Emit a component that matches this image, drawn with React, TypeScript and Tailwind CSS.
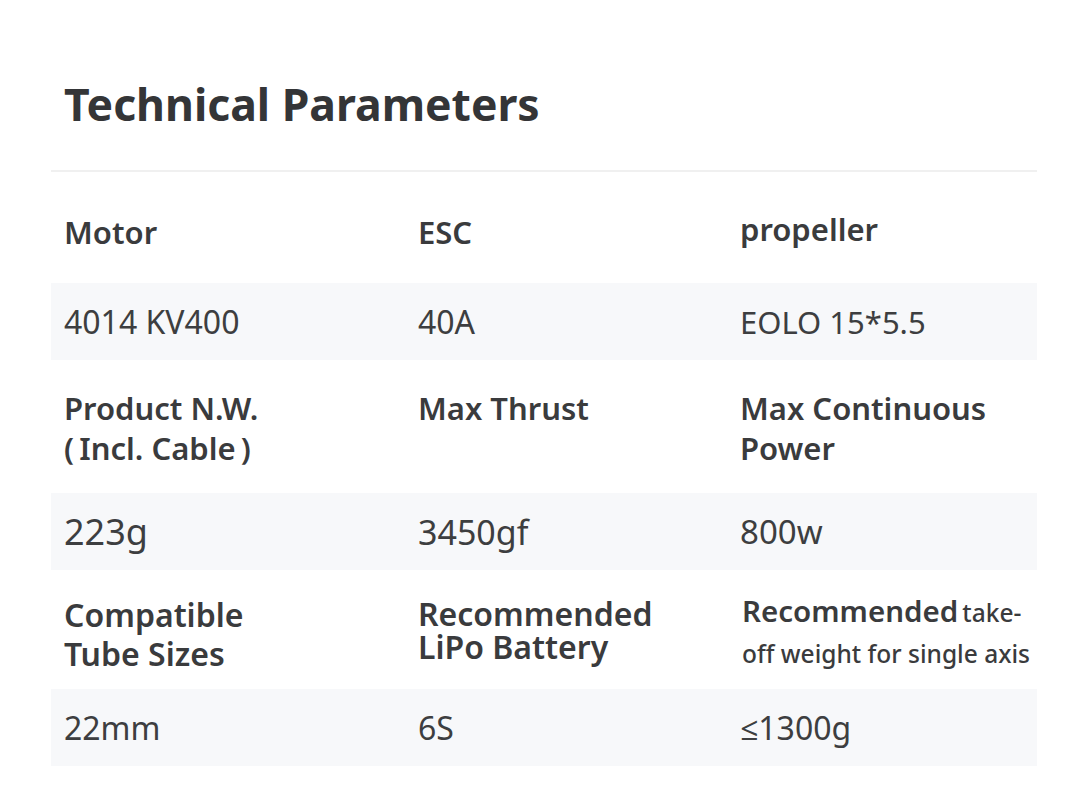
const rows = [
  {
    head: [["Motor"], ["ESC"], ["propeller"]],
    vals: ["4014 KV400", "40A", "EOLO 15*5.5"],
  },
  {
    head: [["Product N.W.", "(\u2009Incl. Cable\u2009)"], ["Max Thrust"], ["Max Continuous", "Power"]],
    vals: ["223g", "3450gf", "800w"],
  },
  {
    vals: ["22mm", "6S", "≤1300g"],
  },
];

function HeadRow({ cells, top }: { cells: string[][]; top: string }) {
  return (
    <div className={`grid grid-cols-[354px_322px_1fr] ${top}`}>
      {cells.map((lines, i) => (
        <div
          key={i}
          className={`pl-[13px] text-[31px] font-semibold leading-[40px] text-[#3a3b3d] ${
            lines[0] === "propeller" ? "-mt-[3px]" : ""
          }`}
        >
          {lines.map((l) => (
            <div key={l}>{l}</div>
          ))}
        </div>
      ))}
    </div>
  );
}

function ValRow({ vals, sizes }: { vals: string[]; sizes: string[] }) {
  return (
    <div className="grid h-[77px] grid-cols-[354px_322px_1fr] items-center bg-[#f7f8fa]">
      {vals.map((v, i) => (
        <div key={v} className={`pl-[13px] leading-[40px] text-[#3d3e40] ${sizes[i]}`}>
          {v}
        </div>
      ))}
    </div>
  );
}

export default function App() {
  return (
    <div
      className="min-h-[811px] w-[1088px] bg-white px-[51px] pt-[74px]"
      style={{ fontFamily: '"Noto Sans", "Open Sans", sans-serif' }}
    >
      <h1 className="pl-[13px] text-[44.5px] font-bold leading-[60px] text-[#343537]">
        Technical Parameters
      </h1>
      <div className="mt-[36px] h-[2px] bg-[#f0f0f0]" />

      <HeadRow cells={rows[0].head!} top="h-[111px] pt-[40px]" />
      <ValRow vals={rows[0].vals} sizes={["text-[32px]", "text-[32px]", "text-[31px]"]} />

      <HeadRow cells={rows[1].head!} top="h-[133px] pt-[28px]" />
      <ValRow vals={rows[1].vals} sizes={["text-[36px]", "text-[34px]", "text-[33px]"]} />

      <div className="grid h-[119px] grid-cols-[354px_322px_1fr] text-[#3a3b3d]">
        <div className="pl-[13px] pt-[25px] text-[32px] font-semibold leading-[39px]">
          <div>Compatible</div>
          <div>Tube Sizes</div>
        </div>
        <div className="pl-[13px] pt-[27px] text-[32px] font-semibold leading-[33px]">
          <div>Recommended</div>
          <div>LiPo Battery</div>
        </div>
        <div className="pl-[15px] pt-[22px] font-semibold leading-[37px]">
          <div className="whitespace-nowrap">
            <span className="text-[29.5px]">Recommended</span>{" "}
            <span className="text-[24.5px] font-medium">take-</span>
          </div>
          <div className="whitespace-nowrap text-[24.5px] font-medium">off weight for single axis</div>
        </div>
      </div>
      <ValRow vals={rows[2].vals} sizes={["text-[32px]", "text-[32px]", "text-[32px]"]} />
    </div>
  );
}
